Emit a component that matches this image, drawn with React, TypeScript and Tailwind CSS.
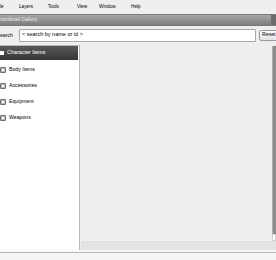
const menu = [
  { label: 'File', w: 'w-[23px]', first: true },
  { label: 'Layers', w: 'w-[29px]' },
  { label: 'Tools', w: 'w-[29px]' },
  { label: 'View', w: 'w-[22px]' },
  { label: 'Window', w: 'w-[32px]' },
  { label: 'Help', w: 'w-[30px]' },
];

const items = ['Body Items', 'Accessories', 'Equipment', 'Weapons'];

function ItemIcon() {
  return (
    <span className="flex size-[6px] shrink-0 items-center justify-center rounded-[1px] border border-[#6e6e6e] bg-[#b9b9b9]">
      <span className="size-[2px] bg-white" />
    </span>
  );
}

export default function App() {
  return (
    <div
      className="flex h-[260px] w-[276px] flex-col overflow-hidden bg-[#eeeeee] text-black"
      style={{ fontFamily: '"Liberation Sans", Arial, sans-serif' }}
    >
      {/* Menu bar */}
      <div className="flex h-[14px] shrink-0 items-center bg-[#efefef] pt-[1px] text-[4.7px] leading-none">
        {menu.map((m) => (
          <span key={m.label} className={`${m.w} shrink-0 ${m.first ? 'ml-[-4px]' : ''}`}>
            {m.label}
          </span>
        ))}
      </div>

      {/* Title bar */}
      <div className="flex h-[12px] shrink-0 items-center border-y border-[#7a7a7a] bg-gradient-to-b from-[#a6a6a6] to-[#7e7e7e]">
        <span className="ml-[-4px] flex-1 text-[5.1px] leading-none text-[#ececec]">Thumbnail Gallery</span>
        <span className="mr-[-1px] h-[10px] w-[6px] bg-[#6c6c6c]" />
      </div>

      {/* Search row */}
      <div className="mt-[2px] flex h-[14px] shrink-0 items-center">
        <span className="ml-[-3px] w-[22px] shrink-0 text-[5px] leading-none">Search</span>
        <div className="flex h-[13px] w-[237px] shrink-0 items-center rounded-[1px] border border-[#a9a9a9] bg-white pl-[2px] text-[5.5px] leading-none">
          &lt; search by name or id &gt;
        </div>
        <div className="ml-[3px] flex h-[11px] w-[24px] shrink-0 items-center rounded-[2px] border border-[#9a9a9a] bg-gradient-to-b from-white to-[#e2e2e2] pl-[2px] text-[5.2px] leading-none">
          Reset
        </div>
      </div>

      {/* Main */}
      <div className="mt-[3px] flex h-[205px] shrink-0">
        <div className="flex w-[80px] shrink-0 flex-col border-r border-t border-[#b8b8b8] bg-white">
          <div className="flex h-[14px] items-center gap-[3px] border-r border-white bg-gradient-to-b from-[#5a5a5a] to-[#363636] text-[5.4px] leading-none text-white">
            <span className="size-[4px] shrink-0 bg-white" />
            Character Items
          </div>
          <div className="flex flex-col pt-[2px]">
            {items.map((it) => (
              <div key={it} className="flex h-[16px] items-center gap-[3px] text-[5.2px] leading-none">
                <ItemIcon />
                {it}
              </div>
            ))}
          </div>
        </div>

        <div className="ml-[1px] flex flex-1 flex-col bg-[#efefef]">
          <div className="flex flex-1">
            <div className="flex-1" />
            <div className="mt-[1px] flex w-[4px] flex-col">
              <div className="flex-1 border-l border-[#b0b0b0] bg-[#8c8c8c]" />
              <div className="h-[7px] border border-[#cfcfcf] bg-white" />
            </div>
          </div>
          <div className="h-[9px] border-t border-[#e0e0e0] bg-[#e4e4e4]" />
        </div>
      </div>

      {/* Bottom edge */}
      <div className="h-[2px] shrink-0 bg-[#f6f6f6]" />
      <div className="h-[1px] shrink-0 bg-[#b5b5b5]" />
      <div className="flex-1 bg-[#f5f5f5]" />
    </div>
  );
}
